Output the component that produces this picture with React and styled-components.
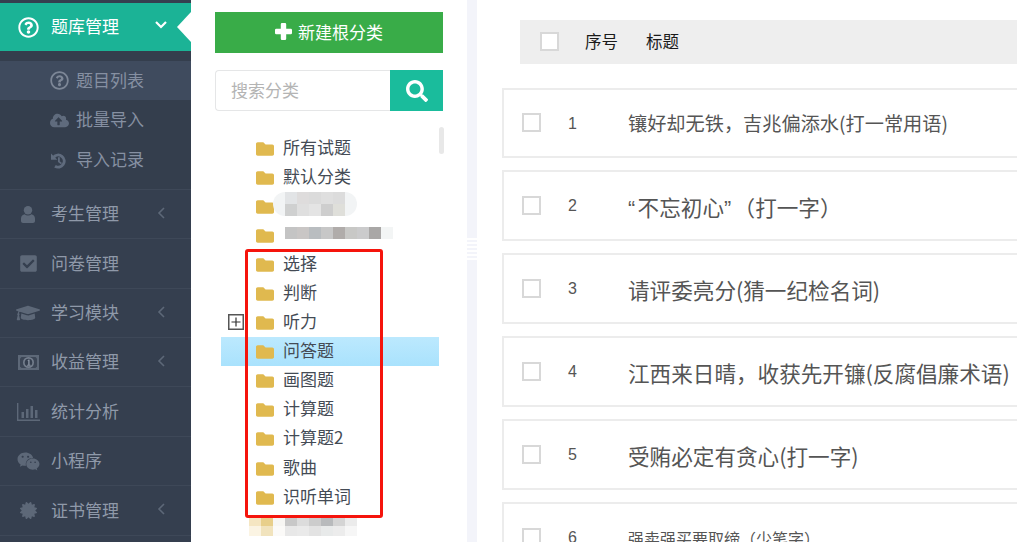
import React from 'react';
import styled, { createGlobalStyle } from 'styled-components';
import {
  FaRegQuestionCircle, FaCloudUploadAlt, FaCheckSquare, FaGraduationCap,
  FaWeixin, FaCertificate, FaFolder, FaSearch,
} from 'react-icons/fa';

const Global = createGlobalStyle`
  html, body { margin: 0; padding: 0; height: 100%; overflow: hidden; background: #fff; }
  * { box-sizing: border-box; }
  body { font-family: "Noto Sans CJK SC", "Liberation Sans", sans-serif; }
`;

const Page = styled.div`
  display: flex;
  width: 1017px;
  height: 542px;
  overflow: hidden;
`;

/* sidebar */
const Sidebar = styled.nav`
  flex: 0 0 191px;
  background: #353f4f;
  padding-top: 3px;
  position: relative;
  overflow: hidden;
`;

const Active = styled.div`
  height: 48px;
  background: #1bb396;
  color: #fff;
  display: flex;
  align-items: center;
  font-size: 17px;
  position: relative;
  &::after {
    content: '';
    position: absolute;
    right: 0;
    top: 9px;
    border-style: solid;
    border-width: 15px 14px 15px 0;
    border-color: transparent #fff transparent transparent;
  }
`;

const IconSlot = styled.span`
  flex: 0 0 51px;
  display: flex;
  justify-content: center;
  padding-left: 5px;
  font-size: ${p => p.$size || 18}px;
  color: ${p => p.$color || '#5d6878'};
`;

const MenuText = styled.span`
  margin-top: -3px;
`;

const Arrow = styled.svg`
  position: absolute;
  left: ${p => p.$left}px;
  top: ${p => p.$top}px;
  fill: none;
  stroke: ${p => p.$color || '#5d6878'};
`;

const SubList = styled.div`
  padding: 10px 0 9px;
  background: #343e4d;
`;

const SubItem = styled.div`
  height: ${p => p.$h}px;
  display: flex;
  align-items: center;
  padding-left: 50px;
  font-size: 17px;
  color: #8690a2;
  background: ${p => (p.$on ? '#3f4b5e' : 'transparent')};
`;

const SubIcon = styled.span`
  flex: 0 0 26px;
  display: flex;
  font-size: 19px;
  color: ${p => (p.$on ? '#7d8797' : '#5f6b7d')};
`;

const MenuItem = styled.div`
  height: ${p => p.$h}px;
  border-top: 1px solid #3e4858;
  display: flex;
  align-items: center;
  position: relative;
  font-size: 17px;
  color: #8f99a9;
`;

/* category tree panel */
const TreePanel = styled.section`
  flex: 0 0 276px;
  padding-top: 12px;
  position: relative;
  overflow: hidden;
`;

const NewBtn = styled.button`
  display: flex;
  align-items: center;
  justify-content: center;
  gap: 6px;
  width: 228px;
  height: 41px;
  margin-left: 24px;
  border: 0;
  padding: 0;
  background: #39ac48;
  color: #fff;
  font: inherit;
  font-size: 17px;
`;

const BtnText = styled.span`
  margin-top: -2px;
`;

const PlusIcon = styled.svg`
  width: 17px;
  height: 17px;
  fill: #fff;
  margin-top: -3px;
`;

const Search = styled.div`
  display: flex;
  width: 228px;
  height: 41px;
  margin: 17px 0 22px 24px;
`;

const SearchInput = styled.div`
  flex: 1;
  border: 1px solid #e5e6e7;
  border-right: 0;
  border-radius: 4px 0 0 4px;
  padding: 0 0 2px 15px;
  display: flex;
  align-items: center;
  font-size: 17px;
  color: #b4b4b4;
`;

const SearchBtn = styled.div`
  flex: 0 0 53px;
  background: #1abc9c;
  color: #fff;
  display: flex;
  align-items: center;
  justify-content: center;
  font-size: 22px;
`;

const TreeRow = styled.div`
  height: 29.1px;
  width: 218px;
  margin-left: 30px;
  padding-left: 7px;
  display: flex;
  align-items: center;
  font-size: 17px;
  color: #444b55;
  background: ${p => (p.$on ? 'linear-gradient(#bce9fe, #a9e2fd)' : 'transparent')};
`;

const TreeLabel = styled.span`
  margin-top: -3px;
  display: flex;
`;

const Expander = styled.span`
  flex: 0 0 16px;
  height: 16px;
  margin-right: 12px;
  display: flex;
  align-items: center;
  justify-content: center;
`;

const PlusBox = styled.svg`
  width: 16px;
  height: 16px;
  display: block;
`;

const Folder = styled(FaFolder)`
  flex: 0 0 18px;
  font-size: 18px;
  margin: 2px 9px 0 0;
  color: #e0b94f;
`;

const Smudge = styled.span`
  display: inline-flex;
  padding: 0 ${p => p.$pad || 0}px 0 ${p => p.$pad || 0}px;
  margin-left: ${p => p.$ml || 0}px;
  background: ${p => p.$bg || 'transparent'};
  border-radius: 12px;
`;

const Mosaic = styled.span`
  display: inline-grid;
  grid-template-columns: repeat(${p => p.$cols}, 12px);
  grid-auto-rows: ${p => p.$rowH || 12}px;
`;

const Cell = styled.i`
  display: block;
  background: ${p => p.$c};
`;

const ScrollThumb = styled.div`
  position: absolute;
  left: 248px;
  top: 127px;
  width: 5px;
  height: 27px;
  border-radius: 3px;
  background: #e8e8e8;
`;

const RedFrame = styled.div`
  position: absolute;
  left: 54px;
  top: 249px;
  width: 138px;
  height: 269px;
  border: 3px solid #f5140c;
  border-radius: 3px;
  pointer-events: none;
`;

const Splitter = styled.div`
  flex: 0 0 10px;
  background: #f3f4fa;
  padding-top: 236px;
`;

const Grip = styled.div`
  height: 26px;
  background: repeating-linear-gradient(#f3f4fa 0 2px, #fff 2px 4px);
`;

/* question list */
const Main = styled.main`
  flex: 1;
  min-width: 0;
  padding-top: 20px;
  overflow: hidden;
`;

const Head = styled.div`
  height: 44px;
  margin: 0 0 24px 43px;
  background: #eeeeee;
  display: flex;
  align-items: center;
  padding-left: 20px;
  font-size: 16.5px;
  color: #1a1a1a;
`;

const Check = styled.span`
  flex: 0 0 19px;
  width: 19px;
  height: 19px;
  margin-top: -1px;
  background: #fff;
  border: 2px solid #d8d8d8;
`;

const HeadCell = styled.span`
  margin: -2px 0 0 ${p => p.$ml}px;
`;

const Row = styled.div`
  height: ${p => p.$h}px;
  margin: 0 0 12px 25px;
  border: 2px solid #ececec;
  border-right: 0;
  display: flex;
  align-items: center;
  padding-left: 18px;
  white-space: nowrap;
`;

const Num = styled.span`
  flex: 0 0 87px;
  padding-left: 27px;
  font-family: "Liberation Sans", sans-serif;
  font-size: 16px;
  color: #555;
  margin-top: 1px;
`;

const Title = styled.span`
  font-size: ${p => p.$size}px;
  margin-top: ${p => p.$dy}px;
  color: #555;
  text-spacing-trim: space-all;
`;

const Quote = styled.span`
  font-family: "Liberation Sans", sans-serif;
  letter-spacing: 2.4px;
`;

const HistoryIcon = () => (
  <svg width="16" height="17" viewBox="0 0 16 17">
    <path d="M3.6 5.2A6 6 0 1 1 5 14.2" fill="none" stroke="currentColor" strokeWidth="3" />
    <path d="M1 1.5v6.3h6.3z" fill="currentColor" />
    <path d="M8 5.2h1.8v4l2.2 1.8-1.1 1.3L8 10z" fill="currentColor" />
  </svg>
);

const UserIcon = () => (
  <svg width="14" height="17" viewBox="0 0 14 17" fill="currentColor">
    <circle cx="7" cy="4.2" r="4.2" />
    <path d="M0 15v-2.5C0 10 2 8.5 3.6 8.2 4.6 9 5.7 9.4 7 9.4s2.4-.4 3.4-1.2C12 8.5 14 10 14 12.5V15c0 1.2-.9 2-2 2H2c-1.100 0-2-.8-2-2z" />
  </svg>
);

const MoneyIcon = () => (
  <svg width="21" height="15" viewBox="0 0 21 15">
    <rect width="21" height="15" fill="#5d6878" />
    <path d="M3.500 2h14l1.500 1.500v8L17.500 13h-14L2 11.500v-8z" fill="#3c4656" />
    <circle cx="10.500" cy="7.500" r="5.500" fill="#747e8d" />
    <circle cx="10.500" cy="7.500" r="3.800" fill="#353f4f" />
    <path d="M9.300 5.200l1.600-.8h.7v5.400h1v1H9.100v-1h1.100V6z" fill="#8a94a3" />
  </svg>
);

const BarsIcon = () => (
  <svg width="23" height="18" viewBox="0 0 23 18" fill="#5d6878">
    <path d="M0 0h1.400v16.400H23V18H0z" />
    <rect x="4.500" y="9" width="2.500" height="6" />
    <rect x="9" y="6" width="2.500" height="9" />
    <rect x="13.500" y="3" width="2.500" height="12" />
    <rect x="18" y="7" width="2.500" height="8" />
  </svg>
);

const LeftArrow = () => (
  <Arrow $left={157} $top={17} width="8" height="12" viewBox="0 0 8 12" strokeWidth="1.6">
    <path d="M7 1L2 6l5 5" />
  </Arrow>
);

const sub = [
  { icon: <FaRegQuestionCircle />, label: '题目列表', h: 39, on: true },
  { icon: <FaCloudUploadAlt />, label: '批量导入', h: 40 },
  { icon: <HistoryIcon />, label: '导入记录', h: 40 },
];

const menu = [
  { icon: <UserIcon />, label: '考生管理', h: 49, arrow: true },
  { icon: <FaCheckSquare />, size: 19, label: '问卷管理', h: 50 },
  { icon: <FaGraduationCap />, size: 24, label: '学习模块', h: 49, arrow: true },
  { icon: <MoneyIcon />, label: '收益管理', h: 49, arrow: true },
  { icon: <BarsIcon />, label: '统计分析', h: 50 },
  { icon: <FaWeixin />, size: 23, label: '小程序', h: 49 },
  { icon: <FaCertificate />, size: 17, label: '证书管理', h: 50, arrow: true },
  { h: 20 },
];

const Blur = ({ rows, rowH }) => (
  <Mosaic $cols={rows[0].length} $rowH={rowH}>
    {rows.flat().map((c, i) => <Cell key={i} $c={c} />)}
  </Mosaic>
);

const tree = [
  { label: '所有试题' },
  { label: '默认分类' },
  {
    bg: '#f2f4f5',
    pad: 12,
    ml: -10,
    blur: [
      ['#e2e4e6', '#dedcdc', '#dbdbdb', '#dfdfdf', '#dcdcdc'],
      ['#cfd0d0', '#dfdfdf', '#e4e4e4', '#cecece', '#dfdfda'],
    ],
  },
  { ml: 2, blur: [['#c4c4c4', '#c9c6c5', '#b9bdc0', '#c7c7c7', '#b0acaa', '#c8c8c6', '#cbcbcc', '#a9a7a6', '#f3f5f5']] },
  { label: '选择' },
  { label: '判断' },
  { label: '听力', plus: true },
  { label: '问答题', on: true },
  { label: '画图题' },
  { label: '计算题' },
  { label: '计算题2' },
  { label: '歌曲' },
  { label: '识听单词' },
];

const rows = [
  { n: 1, t: '镶好却无铁，吉兆偏添水(打一常用语)', size: 19.2, dy: -1, h: 70 },
  {
    n: 2,
    t: <><Quote>“</Quote>不忘初心<Quote>”</Quote>（打一字）</>,
    size: 21.6,
    dy: 1,
    h: 71,
  },
  { n: 3, t: '请评委亮分(猜一纪检名词)', size: 21.6, dy: 1, h: 71 },
  { n: 4, t: '江西来日晴，收获先开镰(反腐倡廉术语)', size: 21.6, dy: 1, h: 71 },
  { n: 5, t: '受贿必定有贪心(打一字)', size: 21.6, dy: 1, h: 71 },
  { n: 6, t: '强卖强买要取缔（少笔字）', size: 16, dy: 0, h: 71 },
];

export default function App() {
  return (
    <Page>
      <Global />
      <Sidebar>
        <Active>
          <IconSlot $size={21} $color="#fff"><FaRegQuestionCircle /></IconSlot>
          <MenuText>题库管理</MenuText>
          <Arrow $left={155} $top={18} $color="#fff" width="12" height="8" viewBox="0 0 12 8" strokeWidth="2.2">
            <path d="M1 1l5 5 5-5" />
          </Arrow>
        </Active>
        <SubList>
          {sub.map(s => (
            <SubItem key={s.label} $h={s.h} $on={s.on}>
              <SubIcon $on={s.on}>{s.icon}</SubIcon>
              <MenuText>{s.label}</MenuText>
            </SubItem>
          ))}
        </SubList>
        {menu.map((m, i) => (
          <MenuItem key={i} $h={m.h}>
            <IconSlot $size={m.size}>{m.icon}</IconSlot>
            <MenuText>{m.label}</MenuText>
            {m.arrow && <LeftArrow />}
          </MenuItem>
        ))}
      </Sidebar>

      <TreePanel>
        <NewBtn>
          <PlusIcon viewBox="0 0 17 17">
            <path d="M7 0h3q1.200 0 1.200 1.200v4.600h4.600Q17 5.800 17 7v3q0 1.200-1.200 1.200h-4.600v4.600Q11.200 17 10 17H7q-1.200 0-1.200-1.200v-4.600H1.200Q0 11.200 0 10V7q0-1.200 1.200-1.200h4.600V1.200Q5.800 0 7 0z" />
          </PlusIcon>
          <BtnText>新建根分类</BtnText>
        </NewBtn>
        <Search>
          <SearchInput>搜索分类</SearchInput>
          <SearchBtn><FaSearch /></SearchBtn>
        </Search>
        {tree.map((item, i) => (
          <TreeRow key={i} $on={item.on}>
            <Expander>
              {item.plus && (
                <PlusBox viewBox="0 0 16 16">
                  <rect x="0.75" y="0.75" width="14.5" height="14.5" fill="#fff" stroke="#555" strokeWidth="1.5" />
                  <path d="M3.5 8h9M8 3.5v9" stroke="#333" strokeWidth="1.2" />
                </PlusBox>
              )}
            </Expander>
            <Folder />
            <TreeLabel>
              {item.label}
              {item.blur && (
                <Smudge $bg={item.bg} $pad={item.pad} $ml={item.ml}>
                  <Blur rows={item.blur} />
                </Smudge>
              )}
            </TreeLabel>
          </TreeRow>
        ))}
        <TreeRow>
          <Smudge $ml={21}>
            <Blur
              rowH={10}
              rows={[
                ['#f5e6c2', '#e8cf8b', '#f7f6f3', '#c8c8c8', '#dcdcdc', '#cccccc', '#b8babc', '#d4d4d4', '#ebebeb'],
                ['#fbf4e3', '#f1e3bd', '#fbfaf8', '#e8e8e8', '#eaeaea', '#e3e3e3', '#e8eaea', '#ececec', '#f6f6f6'],
              ]}
            />
          </Smudge>
        </TreeRow>
        <ScrollThumb />
        <RedFrame />
      </TreePanel>

      <Splitter><Grip /></Splitter>

      <Main>
        <Head>
          <Check />
          <HeadCell $ml={26}>序号</HeadCell>
          <HeadCell $ml={28}>标题</HeadCell>
        </Head>
        {rows.map(r => (
          <Row key={r.n} $h={r.h}>
            <Check />
            <Num>{r.n}</Num>
            <Title $size={r.size} $dy={r.dy}>{r.t}</Title>
          </Row>
        ))}
      </Main>
    </Page>
  );
}
